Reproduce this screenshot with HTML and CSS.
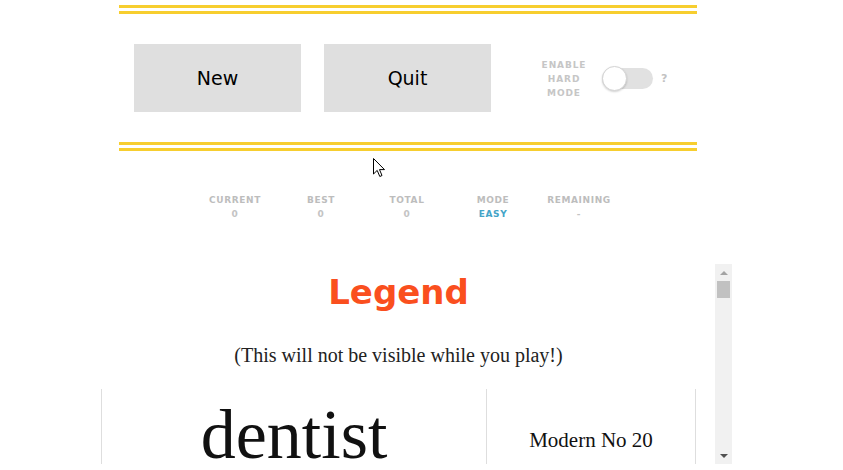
FILE: index.html
```html
<!DOCTYPE html>
<html>
<head>
<meta charset="utf-8">
<link rel="stylesheet" href="styles.css">
</head>
<body>
<div class="page">
  <div class="top">
    <div class="rule"></div>
    <div class="controls">
      <button class="btn">New</button>
      <button class="btn">Quit</button>
      <div class="hard-label">ENABLE<br>HARD<br>MODE</div>
      <div class="toggle"><span class="knob"></span></div>
      <span class="help">?</span>
    </div>
    <div class="rule"></div>
    <div class="stats">
      <div class="stat"><div class="stat-label">CURRENT</div><div class="stat-value">0</div></div>
      <div class="stat"><div class="stat-label">BEST</div><div class="stat-value">0</div></div>
      <div class="stat"><div class="stat-label">TOTAL</div><div class="stat-value">0</div></div>
      <div class="stat"><div class="stat-label">MODE</div><div class="stat-value easy">EASY</div></div>
      <div class="stat"><div class="stat-label">REMAINING</div><div class="stat-value">-</div></div>
    </div>
  </div>
  <div class="legend-box">
    <div class="legend-scroll">
      <div class="legend-content">
        <h1 class="legend-title">Legend</h1>
        <p class="legend-note">(This will not be visible while you play!)</p>
        <table class="legend-table">
          <tr><td class="word">dentist</td><td class="font-name">Modern No 20</td></tr>
          <tr><td class="word">harbor</td><td class="font-name">Garamond</td></tr>
          <tr><td class="word">quiet</td><td class="font-name">Baskerville</td></tr>
        </table>
      </div>
    </div>
    <div class="scrollbar">
      <div class="sb-arrow sb-up"></div>
      <div class="sb-track"><div class="sb-thumb"></div></div>
      <div class="sb-arrow sb-down"></div>
    </div>
  </div>
</div>
<svg class="cursor" width="13" height="20" viewBox="0 0 13 20"><path d="M0.5 0.5 L0.5 16 L4.2 12.4 L6.8 18.5 L9 17.5 L6.5 11.6 L11.5 11.6 Z" fill="#fff" stroke="#000" stroke-width="1" stroke-linejoin="round"/></svg>
</body>
</html>
```
FILE: styles.css
```css
html, body {
  margin: 0;
  padding: 0;
  background: #fff;
  overflow: hidden;
}
body {
  font-family: "DejaVu Sans", "Liberation Sans", sans-serif;
  position: relative;
  width: 843px;
  height: 470px;
}
.page {
  display: flex;
  flex-direction: column;
}
.top {
  width: 578px;
  margin-left: 119px;
  padding-top: 5px;
}
.rule {
  height: 3px;
  border-top: 3px solid #f7ce2f;
  border-bottom: 3px solid #f7ce2f;
}
.controls {
  display: flex;
  align-items: center;
  height: 128px;
  padding-left: 15px;
  box-sizing: border-box;
}
.btn {
  width: 167px;
  height: 68px;
  margin: 0 23px 0 0;
  border: none;
  background: #dfdfdf;
  font-family: "DejaVu Sans", sans-serif;
  font-size: 19px;
  color: #000;
  padding: 0;
}
.btn + .btn {
  margin-right: 50px;
}
.hard-label {
  width: 46px;
  text-align: center;
  font-size: 9px;
  font-weight: bold;
  letter-spacing: 0.9px;
  line-height: 14px;
  color: #c6c6c6;
  margin-top: 2px;
}
.toggle {
  position: relative;
  width: 51px;
  height: 21px;
  border-radius: 11px;
  background: #e1e1e1;
  margin-left: 15px;
}
.knob {
  position: absolute;
  left: 0;
  top: -2px;
  width: 23px;
  height: 23px;
  border-radius: 50%;
  background: #fff;
  border: 1px solid #d4d4d4;
  box-shadow: 0 1px 2px rgba(0,0,0,0.18);
}
.help {
  margin-left: 8px;
  font-size: 11px;
  font-weight: bold;
  color: #c2c2c2;
}
.stats {
  display: flex;
  justify-content: center;
  margin-top: 42px;
  margin-right: 2px;
}
.stat {
  width: 86px;
  text-align: center;
}
.stat-label {
  font-size: 9px;
  font-weight: bold;
  letter-spacing: 0.6px;
  color: #bdbdbd;
  line-height: 14px;
}
.stat-value {
  font-size: 9px;
  font-weight: bold;
  letter-spacing: 0.6px;
  color: #c4c4c4;
  line-height: 14px;
}
.stat-value.easy {
  color: #45a4c8;
}
.legend-box {
  display: flex;
  margin-top: 43px;
  margin-left: 82px;
  width: 650px;
  height: 200px;
}
.legend-scroll {
  flex: 1;
  overflow: hidden;
}
.legend-content {
  display: flex;
  flex-direction: column;
  align-items: center;
}
.legend-title {
  margin: 8px 0 0;
  font-family: "DejaVu Sans", sans-serif;
  font-weight: bold;
  font-size: 34px;
  line-height: 40px;
  color: #fa4f1e;
}
.legend-note {
  margin: 31px 0 0;
  font-family: "Liberation Serif", serif;
  font-size: 20px;
  line-height: 24px;
  color: #222;
}
.legend-table {
  margin-top: 22px;
  width: 595px;
  border-collapse: collapse;
}
.legend-table td {
  border-left: 1px solid #dedede;
  border-right: 1px solid #dedede;
  height: 130px;
  text-align: center;
  vertical-align: top;
  font-family: "Liberation Serif", serif;
  color: #111;
  padding: 0;
}
.legend-table td.word {
  width: 384px;
  font-size: 70px;
  line-height: 70px;
  padding-top: 11px;
}
.legend-table td.font-name {
  font-size: 21px;
  line-height: 24px;
  padding-top: 39px;
}
.scrollbar {
  width: 17px;
  display: flex;
  flex-direction: column;
  background: #f1f1f1;
}
.sb-arrow {
  height: 17px;
  display: flex;
  align-items: center;
  justify-content: center;
}
.sb-up::before {
  content: "";
  border-left: 4px solid transparent;
  border-right: 4px solid transparent;
  border-bottom: 4px solid #a3a3a3;
}
.sb-down::before {
  content: "";
  border-left: 4px solid transparent;
  border-right: 4px solid transparent;
  border-top: 4px solid #505050;
}
.sb-track {
  flex: 1;
  padding: 0 2px;
}
.sb-thumb {
  height: 17px;
  background: #c1c1c1;
}
.cursor {
  position: absolute;
  left: 373px;
  top: 158px;
}
```
